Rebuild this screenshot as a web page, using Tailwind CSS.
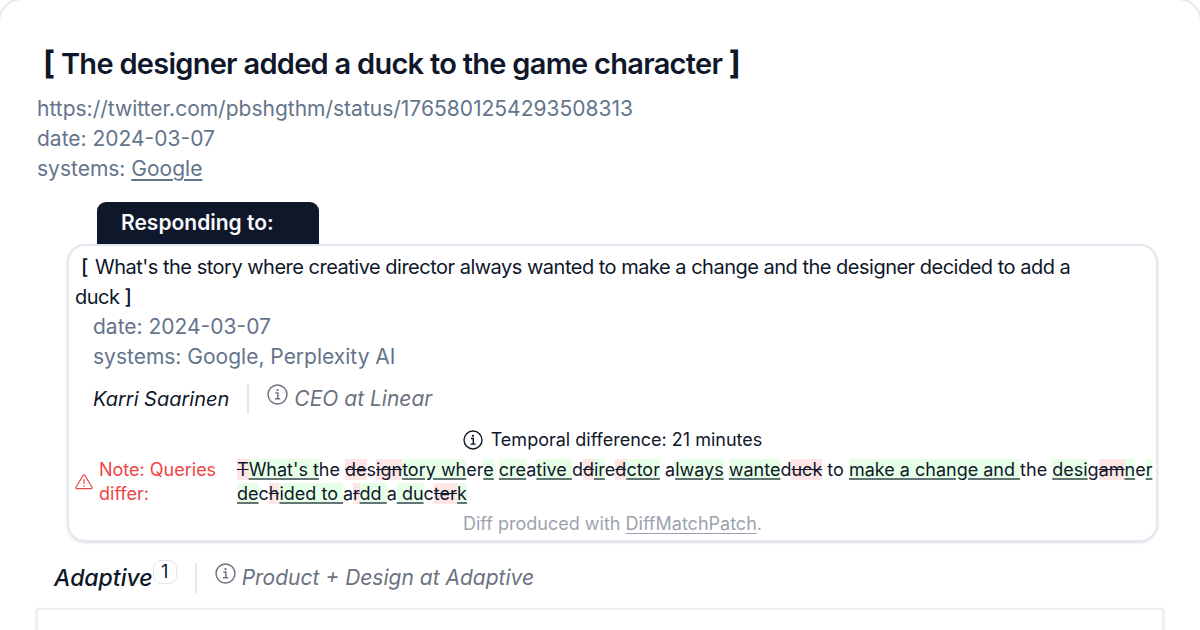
<!DOCTYPE html>
<html lang="en">
<head>
<meta charset="utf-8">
<meta name="viewport" content="width=device-width, initial-scale=1">
<title>The designer added a duck to the game character</title>
<script src="https://cdn.jsdelivr.net/npm/@tailwindcss/browser@4"></script>
</head>
<body class="overflow-hidden bg-white font-['Inter',sans-serif] text-[#0f172a]">
<svg class="hidden">
  <symbol id="info" viewBox="0 0 20 20"><g fill="none" stroke="currentColor" stroke-width="1.4"><circle cx="10" cy="10" r="9"/><path d="M8 8.5h2.3v5.3M7.6 14.1h5"/></g><circle cx="10" cy="5.8" r="1.1" fill="currentColor"/></symbol>
</svg>
<main class="-mx-0.5 -mt-0.5 min-h-screen rounded-t-3xl border-2 border-[#e2e8f0] px-9 pt-[43px]">
  <header class="px-px">
    <h1 class="px-1.5 text-[29px] leading-10 font-semibold tracking-tight"><span class="text-[32px] font-bold">[</span> The designer added a duck to the game character <span class="text-[32px] font-bold">]</span></h1>
    <div class="mt-2.5 text-[21px] leading-[30px] text-[#64748b]">
      <p>https://twitter.com/pbshgthm/status/1765801254293508313</p>
      <p>date: 2024-03-07</p>
      <p>systems: <a href="#google" class="underline underline-offset-3">Google</a></p>
    </div>
  </header>
  <section class="mt-[18px] mr-[6px] ml-[31px]">
    <h2 class="ml-[30px] w-[222px] rounded-t-[9px] bg-[#0f172a] px-6 py-1.5 text-[21px] leading-[30px] font-semibold text-[#f8fafc]">Responding to:</h2>
    <div class="rounded-[18px] border-2 border-[#e2e8f0] px-1.5 pt-1.5 pb-1 shadow-sm">
      <p class="pr-12 text-[20px] leading-[30px] tracking-tight"><span class="mr-0.5 ml-1.5 font-medium">[</span> What's the story where creative director always wanted to make a change and the designer decided to add a duck <span class="font-medium">]</span></p>
      <div class="px-[18px] text-[21px] leading-[30px] text-[#64748b]">
        <p>date: 2024-03-07</p>
        <p>systems: Google, Perplexity AI</p>
      </div>
      <div class="mt-3 flex h-[30px] items-center px-[18px] text-[20px] leading-[30px] italic">
        <span>Karri Saarinen</span>
        <span class="ml-[18px] h-[30px] w-0.5 bg-[#e5e7eb]"></span>
        <span class="ml-[18px] flex gap-1.5 text-[21px] text-[#6b7280]"><svg class="size-[21px]"><use href="#info"/></svg>CEO at Linear</span>
      </div>
      <div class="mt-3.5 flex items-center justify-center gap-2 text-[18px] leading-6"><svg class="size-5"><use href="#info"/></svg>Temporal difference: 21 minutes</div>
      <div class="-mr-1.5 mt-1.5 flex items-center text-[18px] leading-6">
        <svg class="size-[18px] shrink-0 text-[#ef4444]" viewBox="0 0 18 18" fill="none" stroke="currentColor" stroke-linejoin="round"><path d="M8.2 2.2a1 1 0 0 1 1.6 0l7.2 12a.9.9 0 0 1-.8 1.4H1.8a.9.9 0 0 1-.8-1.4zM9 6.2v4.8M9 12.2v1.6" stroke-width="1.2"/></svg>
        <span class="ml-1.5 w-[138px] shrink-0 pr-4 text-[#ef4444]">Note: Queries differ:</span>
        <p class="min-w-0 flex-1 [&_del]:bg-[#ffe6e6] [&_ins]:bg-[#e6ffe6] [&_ins]:decoration-[#0f172a]/60 [&_ins]:decoration-2 [&_ins]:underline-offset-2"><del>T</del><ins>What's t</ins>he <del>de</del>s<del>ign</del><ins>tory wh</ins>er<ins>e</ins> <ins>cre</ins>a<ins>tive </ins>d<del>d</del><ins>ir</ins>e<del>d</del><ins>ctor</ins> a<ins>lways</ins> <ins>wante</ins>d<del>uck</del> to <ins>make a change and </ins>the <ins>desi</ins>g<del>am</del><ins>n</ins>e<ins>r</ins> <ins>de</ins>c<del>h</del><ins>ided to </ins>a<del>r</del><ins>dd </ins>a<ins> du</ins>c<del>ter</del><ins>k</ins></p>
      </div>
      <p class="mt-1.5 text-center text-[18px] leading-6 text-[#9ca3af]">Diff produced with <a href="#diffmatchpatch" class="underline underline-offset-3">DiffMatchPatch</a>.</p>
    </div>
  </section>
  <div class="mt-[18px] flex h-9 items-center pl-[18px]">
    <span class="text-[23px] font-medium italic">Adaptive</span>
    <sup class="static mb-3 flex h-6 w-6 items-center justify-center rounded-lg border border-[#e2e8f0] text-[18px] leading-6">1</sup>
    <span class="ml-[18px] h-[30px] w-0.5 bg-[#e2e8f0]"></span>
    <span class="ml-[18px] flex gap-1.5 text-[21px] leading-[30px] text-[#6b7280] italic"><svg class="size-[21px]"><use href="#info"/></svg>Product + Design at Adaptive</span>
  </div>
  <div class="mt-3 h-24 border-2 border-[#e9eef5] shadow-sm"></div>
</main>
</body>
</html>
